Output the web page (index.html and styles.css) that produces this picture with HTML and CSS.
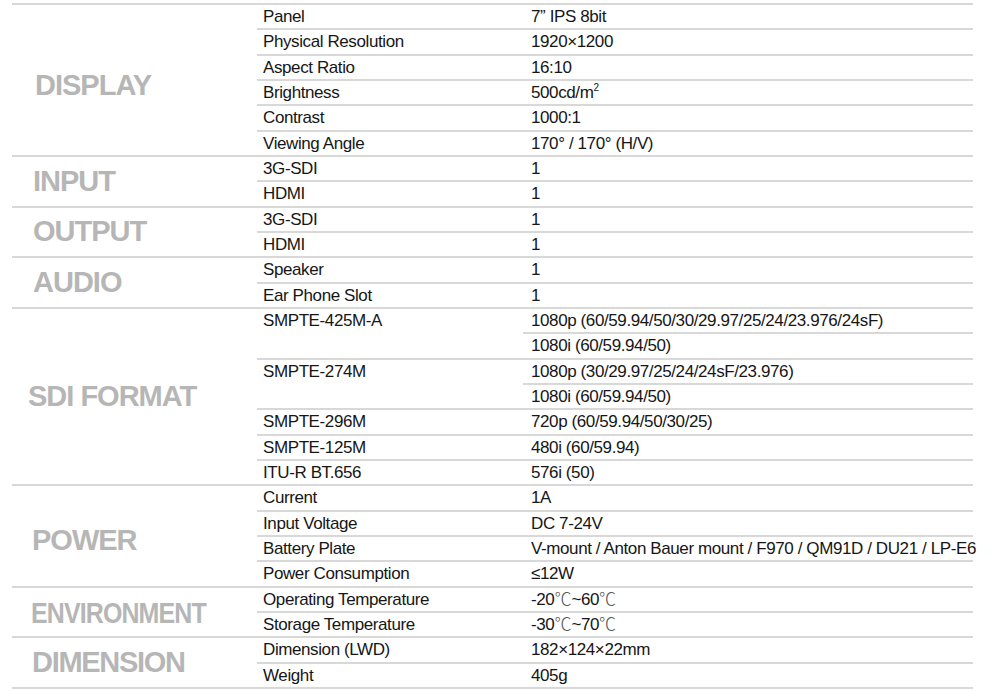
FILE: index.html
```html
<!DOCTYPE html>
<html lang="en">
<head>
<meta charset="utf-8">
<title>Specifications</title>
<link rel="stylesheet" href="styles.css">
</head>
<body>
<div class="spec">
  <section class="section">
    <div class="cat cat-display">DISPLAY</div>
    <div class="rows">
      <div class="row"><div class="label">Panel</div><div class="values"><div class="value">7” IPS 8bit</div></div></div>
      <div class="row"><div class="label">Physical Resolution</div><div class="values"><div class="value">1920×1200</div></div></div>
      <div class="row"><div class="label">Aspect Ratio</div><div class="values"><div class="value">16:10</div></div></div>
      <div class="row"><div class="label">Brightness</div><div class="values"><div class="value">500cd/m<span class="sup">2</span></div></div></div>
      <div class="row"><div class="label">Contrast</div><div class="values"><div class="value">1000:1</div></div></div>
      <div class="row"><div class="label">Viewing Angle</div><div class="values"><div class="value">170° / 170° (H/V)</div></div></div>
    </div>
  </section>
  <section class="section">
    <div class="cat">INPUT</div>
    <div class="rows">
      <div class="row"><div class="label">3G-SDI</div><div class="values"><div class="value">1</div></div></div>
      <div class="row"><div class="label">HDMI</div><div class="values"><div class="value">1</div></div></div>
    </div>
  </section>
  <section class="section">
    <div class="cat">OUTPUT</div>
    <div class="rows">
      <div class="row"><div class="label">3G-SDI</div><div class="values"><div class="value">1</div></div></div>
      <div class="row"><div class="label">HDMI</div><div class="values"><div class="value">1</div></div></div>
    </div>
  </section>
  <section class="section">
    <div class="cat">AUDIO</div>
    <div class="rows">
      <div class="row"><div class="label">Speaker</div><div class="values"><div class="value">1</div></div></div>
      <div class="row"><div class="label">Ear Phone Slot</div><div class="values"><div class="value">1</div></div></div>
    </div>
  </section>
  <section class="section">
    <div class="cat cat-sdi">SDI FORMAT</div>
    <div class="rows">
      <div class="row"><div class="label">SMPTE-425M-A</div><div class="values"><div class="value">1080p (60/59.94/50/30/29.97/25/24/23.976/24sF)</div><div class="value">1080i (60/59.94/50)</div></div></div>
      <div class="row"><div class="label">SMPTE-274M</div><div class="values"><div class="value">1080p (30/29.97/25/24/24sF/23.976)</div><div class="value">1080i (60/59.94/50)</div></div></div>
      <div class="row"><div class="label">SMPTE-296M</div><div class="values"><div class="value">720p (60/59.94/50/30/25)</div></div></div>
      <div class="row"><div class="label">SMPTE-125M</div><div class="values"><div class="value">480i (60/59.94)</div></div></div>
      <div class="row"><div class="label">ITU-R BT.656</div><div class="values"><div class="value">576i (50)</div></div></div>
    </div>
  </section>
  <section class="section">
    <div class="cat cat-power">POWER</div>
    <div class="rows">
      <div class="row"><div class="label">Current</div><div class="values"><div class="value">1A</div></div></div>
      <div class="row"><div class="label">Input Voltage</div><div class="values"><div class="value">DC 7-24V</div></div></div>
      <div class="row"><div class="label">Battery Plate</div><div class="values"><div class="value">V-mount / Anton Bauer mount / F970 / QM91D / DU21 / LP-E6</div></div></div>
      <div class="row"><div class="label">Power Consumption</div><div class="values"><div class="value">≤12W</div></div></div>
    </div>
  </section>
  <section class="section">
    <div class="cat"><span class="squeeze">ENVIRONMENT</span></div>
    <div class="rows">
      <div class="row"><div class="label">Operating Temperature</div><div class="values"><div class="value">-20<span class="cel">℃</span>~60<span class="cel">℃</span></div></div></div>
      <div class="row"><div class="label">Storage Temperature</div><div class="values"><div class="value">-30<span class="cel">℃</span>~70<span class="cel">℃</span></div></div></div>
    </div>
  </section>
  <section class="section">
    <div class="cat cat-dim">DIMENSION</div>
    <div class="rows">
      <div class="row"><div class="label">Dimension (LWD)</div><div class="values"><div class="value">182×124×22mm</div></div></div>
      <div class="row"><div class="label">Weight</div><div class="values"><div class="value">405g</div></div></div>
    </div>
  </section>
</div>
</body>
</html>
```

FILE: styles.css
```css
html, body {
  margin: 0;
  padding: 0;
  background: #ffffff;
}

body {
  font-family: "Liberation Sans", Arial, "Noto Sans CJK SC", sans-serif;
  color: #161616;
}

.spec {
  margin: 3px 0 0 12px;
  width: 961px;
  border-bottom: 2px solid #d8d8d8;
}

.section {
  display: flex;
}

.cat {
  width: 245px;
  flex: 0 0 245px;
  box-sizing: border-box;
  border-top: 2px solid #d8d8d8;
  display: flex;
  align-items: center;
  padding-left: 21px;
  font-size: 29px;
  font-weight: bold;
  letter-spacing: -1px;
  color: #b6b6b6;
  white-space: nowrap;
}

.cat-display {
  padding-left: 23px;
  padding-top: 12px;
}

.cat-sdi {
  padding-left: 16px;
}

.cat-power {
  padding-top: 10px;
  padding-left: 20px;
}

.cat-dim {
  letter-spacing: -1.3px;
  padding-left: 20px;
}

.squeeze {
  display: inline-block;
  transform: scaleX(0.86);
  transform-origin: left center;
  margin-left: -2px;
  margin-top: 4px;
}

.rows {
  flex: 1;
  min-width: 0;
}

.row {
  display: flex;
  border-top: 2px solid #d8d8d8;
  font-size: 17px;
  letter-spacing: -0.4px;
}

.label {
  width: 266px;
  flex: 0 0 266px;
  box-sizing: border-box;
  padding-left: 6px;
  height: 23.33px;
  line-height: 23.33px;
  white-space: nowrap;
}

.values {
  flex: 1;
  min-width: 0;
}

.value {
  height: 23.33px;
  line-height: 23.33px;
  padding-left: 8px;
  white-space: nowrap;
}

.value + .value {
  border-top: 2px solid #d8d8d8;
}

.sup {
  font-size: 10px;
  vertical-align: 7px;
  line-height: 0;
}

.cel {
  font-family: "Noto Sans CJK SC", sans-serif;
  font-weight: 300;
  line-height: 0;
  color: #555555;
  letter-spacing: 0;
}
```
